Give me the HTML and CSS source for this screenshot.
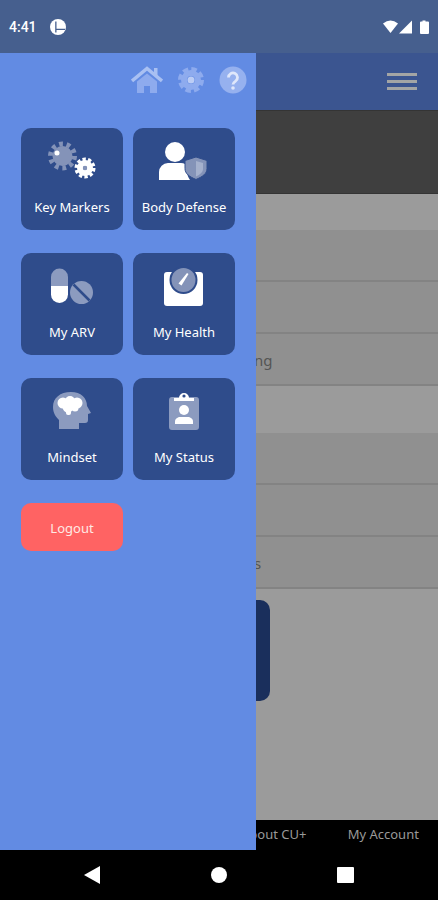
FILE: index.html
```html
<!DOCTYPE html>
<html lang="en">
<head>
    <meta charset="UTF-8">
    <title>CU+ menu</title>
    <link rel="stylesheet" href="styles.css">
</head>
<body>
    <div class="status">
        <span class="time">4:41</span>
        <svg class="status-badge" width="16" height="16" viewBox="0 0 16 16">
            <circle cx="8" cy="8" r="8" fill="#fff"/>
            <path d="M5.200 2.500h1.300v11H5.200zM6.500 9.800h8.500v1.300H6.500z" fill="#465f8e"/>
        </svg>
        <span class="status-space"></span>
        <svg width="48" height="16" viewBox="0 0 48 16">
            <path d="M0 4.500Q7.500 -1.500 15 4.500L7.500 14z" fill="#fff"/>
            <path d="M16 14.500L29 1.500v13z" fill="#fff"/>
            <path d="M37 3.500a1 1 0 0 1 1-1h1.500v-1h3v1H45a1 1 0 0 1 1 1V14a1 1 0 0 1-1 1h-7a1 1 0 0 1-1-1z" fill="#fff"/>
        </svg>
    </div>

    <div class="app">
        <div class="app-head">
            <div class="burger"><i></i><i></i><i></i></div>
        </div>
        <div class="banner"></div>
        <div class="section"></div>
        <div class="row"></div>
        <div class="row"></div>
        <div class="row row-text">ng</div>
        <div class="section section-two"></div>
        <div class="row"></div>
        <div class="row"></div>
        <div class="row row-text">s</div>
        <div class="rest">
            <div class="rest-btn"></div>
        </div>
        <div class="tabs">
            <span></span>
            <span></span>
            <span>About CU+</span>
            <span>My Account</span>
        </div>

        <div class="drawer">
            <div class="drawer-top">
                <svg width="32" height="28" viewBox="0 0 32 28">
                    <path d="M1 15L16 2.500 31 15" fill="none" stroke="#a9c0f2" stroke-width="3.500"/>
                    <path d="M23 2h3.500v8H23z" fill="#a9c0f2"/>
                    <path d="M6 15.500L16 7.500l10 8V27h-7v-7h-6v7H6z" fill="#8eabee"/>
                </svg>
                <svg width="28" height="28" viewBox="0 0 28 28">
                    <circle cx="14" cy="14" r="11" fill="none" stroke="#8eabee" stroke-width="4" stroke-dasharray="5.500 3.140"/>
                    <circle cx="14" cy="14" r="7" fill="none" stroke="#8eabee" stroke-width="6"/>
                    <circle cx="14" cy="14" r="3.500" fill="#bccdf5"/>
                </svg>
                <svg width="28" height="28" viewBox="0 0 28 28">
                    <circle cx="14" cy="14" r="13.500" fill="#96b1ef"/>
                    <path d="M9.500 11.500a4.500 4.500 0 1 1 7 3.700c-1.500 1-2.500 1.600-2.500 3.300" fill="none" stroke="#dfe7fb" stroke-width="2.800"/>
                    <circle cx="14" cy="22" r="1.800" fill="#dfe7fb"/>
                </svg>
            </div>

            <div class="menu">
                <a class="card">
                    <svg class="card-icon" viewBox="0 0 102 66">
                        <circle cx="41.500" cy="28" r="12" fill="none" stroke="#8493b8" stroke-width="5" stroke-dasharray="3.800 3.740"/>
                        <circle cx="41.500" cy="28" r="10" fill="#8493b8"/>
                        <circle cx="36" cy="25" r="2.500" fill="#fff"/>
                        <circle cx="64" cy="40" r="8.500" fill="none" stroke="#fff" stroke-width="4" stroke-dasharray="3.200 2.140"/>
                        <circle cx="64" cy="40" r="5" fill="none" stroke="#fff" stroke-width="6"/>
                        <circle cx="64" cy="40" r="2.200" fill="#8493b8"/>
                    </svg>
                    <span>Key Markers</span>
                </a>
                <a class="card">
                    <svg class="card-icon" viewBox="0 0 102 66">
                        <circle cx="42" cy="24" r="10" fill="#fff"/>
                        <path d="M26 52V44a9 9 0 0 1 9-9h13a9 9 0 0 1 7 4c-2 6 0 10 2 13z" fill="#fff"/>
                        <path d="M63 29l11 3.500v8c0 5-4 8-11 11-7-3-11-6-11-11v-8z" fill="#8493b8" stroke="#2f4c8b" stroke-width="1"/>
                        <path d="M63 33l7 2v6c0 3-3 5.500-7 7.500z" fill="#a5b1cd"/>
                    </svg>
                    <span>Body Defense</span>
                </a>
                <a class="card">
                    <svg class="card-icon" viewBox="0 0 102 66">
                        <path d="M30 33V24a8.500 8.500 0 0 1 17 0v9z" fill="#8c9bbf"/>
                        <path d="M30 33v8.500a8.500 8.500 0 0 0 17 0V33z" fill="#fff"/>
                        <circle cx="60.500" cy="39.500" r="11.500" fill="#8c9bbf"/>
                        <path d="M52.500 31.500l16 16" stroke="#2f4c8b" stroke-width="2.500"/>
                    </svg>
                    <span>My ARV</span>
                </a>
                <a class="card">
                    <svg class="card-icon" viewBox="0 0 102 66">
                        <rect x="31" y="19" width="39" height="34" rx="3" fill="#fff"/>
                        <circle cx="50.500" cy="27" r="14" fill="#2f4c8b"/>
                        <circle cx="50.500" cy="27" r="12" fill="#8493b8"/>
                        <path d="M45.500 30.500L54 20l1.500 1-7 11.500z" fill="#fff"/>
                    </svg>
                    <span>My Health</span>
                </a>
                <a class="card">
                    <svg class="card-icon" viewBox="0 0 102 66">
                        <path d="M50 14c-11 0-18 6-18 15 0 6 3 10 6 13v9h20v-6h6c2 0 3-1 3-3v-6l3-1-4-7c0-8-6-14-16-14z" fill="#8c9bbf"/>
                        <g fill="#fff">
                            <circle cx="42" cy="25" r="5.500"/>
                            <circle cx="49" cy="23" r="5"/>
                            <circle cx="56" cy="25" r="5.500"/>
                            <circle cx="47" cy="29" r="5.500"/>
                            <circle cx="54" cy="30" r="3.500"/>
                            <rect x="45" y="30" width="5" height="7" rx="2"/>
                        </g>
                    </svg>
                    <span>Mindset</span>
                </a>
                <a class="card">
                    <svg class="card-icon" viewBox="0 0 102 66">
                        <rect x="36" y="19" width="30" height="33" rx="3" fill="#8c9bbf"/>
                        <path d="M41 23v-3h5a5 5 0 0 1 10 0h5v3z" fill="#fff"/>
                        <circle cx="51" cy="18" r="1.600" fill="#2f4c8b"/>
                        <circle cx="51" cy="32" r="5" fill="#fff"/>
                        <path d="M42 46v-2.500c0-3 3-4.500 5-4.500h8c2 0 5 1.500 5 4.500V46z" fill="#fff"/>
                    </svg>
                    <span>My Status</span>
                </a>
                <a class="logout">Logout</a>
            </div>
        </div>
    </div>

    <div class="nav">
        <svg width="16" height="18" viewBox="0 0 16 18"><path d="M0 9L16 0v18z" fill="#fff"/></svg>
        <svg width="16" height="16" viewBox="0 0 16 16"><circle cx="8" cy="8" r="8" fill="#fff"/></svg>
        <svg class="nav-square" width="17" height="16" viewBox="0 0 17 16"><rect width="17" height="16" rx="1" fill="#fff"/></svg>
    </div>
</body>
</html>
```

FILE: styles.css
```css
*{
    margin: 0;
    padding: 0;
    box-sizing: border-box;
}
html,body{
    width: 100%;
    height: 100%;
}
body{
    display: flex;
    flex-direction: column;
    overflow: hidden;
    background: #000;
    font-family: "Noto Sans", sans-serif;
}
.status{
    height: 53px;
    display: flex;
    align-items: center;
    padding: 0 0 0 9px;
    background: #465f8e;
    color: #fff;
}
.time{
    font-family: Roboto, sans-serif;
    font-size: 14px;
    font-weight: 500;
}
.status-badge{
    margin-left: 13px;
}
.status-space{
    flex: 1;
}
.status svg:last-child{
    margin-right: 7px;
}

.app{
    position: relative;
    height: 797px;
    display: flex;
    flex-direction: column;
}
.app-head{
    height: 57px;
    display: flex;
    justify-content: flex-end;
    align-items: center;
    padding: 3px 21px 0 0;
    background: #3b5590;
}
.burger{
    width: 30px;
}
.burger i{
    display: block;
    height: 3px;
    margin-bottom: 4px;
    background: #a3a5a5;
}
.banner{
    height: 84px;
    background: #3f3f3f;
    border-top: 1px solid #343434;
    border-bottom: 1px solid #343434;
}
.section{
    height: 36px;
    background: #9b9b9b;
}
.section-two{
    height: 47px;
}
.row{
    height: 52px;
    background: #909090;
    border-bottom: 2px solid #838383;
}
.row-text{
    padding-left: 254px;
    line-height: 52px;
    font-size: 15px;
    color: #555;
}
.rest{
    flex: 1;
    padding-top: 11px;
    background: #9b9b9b;
}
.rest-btn{
    width: 270px;
    height: 101px;
    background: #1a2f5c;
    border-radius: 10px;
}
.tabs{
    height: 30px;
    display: grid;
    grid-template-columns: repeat(4, 1fr);
    background: #000;
    color: #999;
    font-size: 13px;
    line-height: 28px;
    text-align: center;
}

.drawer{
    position: absolute;
    top: 0;
    left: 0;
    bottom: 0;
    width: 256px;
    background: #628be3;
}
.drawer-top{
    height: 75px;
    display: flex;
    justify-content: flex-end;
    gap: 14px;
    padding: 13px 9px 0 0;
}
.menu{
    display: grid;
    grid-template-columns: 102px 102px;
    gap: 23px 10px;
    padding-left: 21px;
}
.card{
    height: 102px;
    display: flex;
    flex-direction: column;
    align-items: center;
    background: #2f4c8b;
    border-radius: 10px;
    color: #fff;
    font-size: 13px;
}
.card-icon{
    width: 102px;
    height: 66px;
    margin-bottom: 4px;
}
.logout{
    height: 48px;
    background: #ff6363;
    border-radius: 10px;
    color: #ffe9e4;
    font-size: 13px;
    line-height: 50px;
    text-align: center;
}
.nav{
    flex: 1;
    display: flex;
    align-items: center;
    padding-left: 84px;
    gap: 111px;
}
.nav-square{
    margin-left: -1px;
}
```
